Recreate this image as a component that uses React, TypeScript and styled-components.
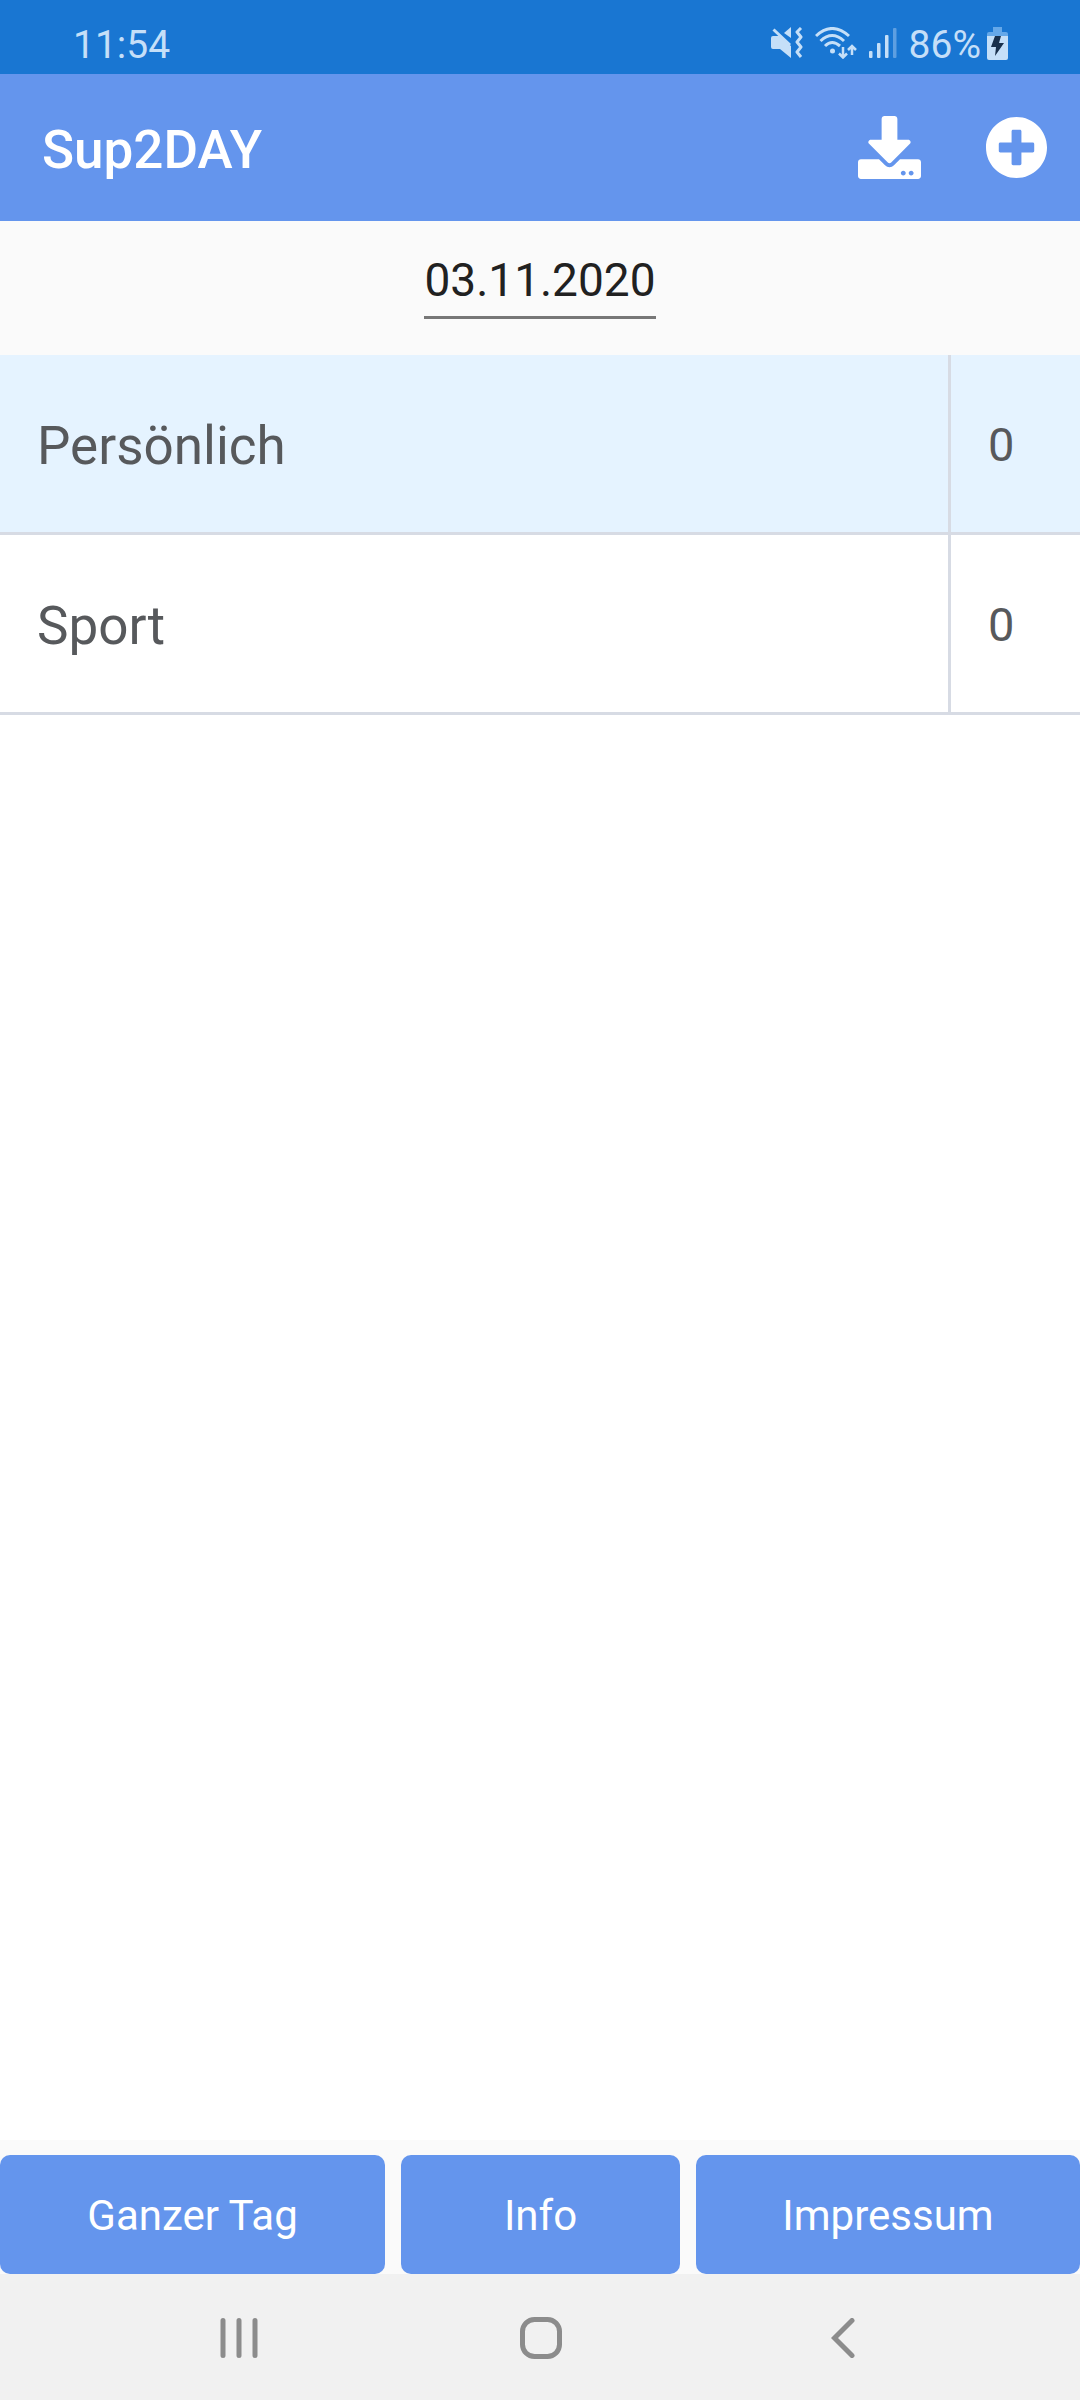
import React, { useState } from "react";
import styled, { createGlobalStyle } from "styled-components";
import { FaDownload, FaPlusCircle } from "react-icons/fa";

const GlobalStyle = createGlobalStyle`
  *, *::before, *::after { box-sizing: border-box; }
  body {
    margin: 0;
    background: #ffffff;
    font-family: Roboto, "Noto Sans", sans-serif;
  }
  button, input { font-family: inherit; }
`;

const Screen = styled.div`
  display: flex;
  flex-direction: column;
  min-height: 100vh;
`;

const StatusBar = styled.div`
  display: flex;
  align-items: center;
  justify-content: space-between;
  height: 74px;
  padding: 12px 72px 0 73px;
  background: #1976d2;
  color: #c5dff8;
`;

const StatusText = styled.span`
  padding-top: 3px;
  font-size: 39px;
  line-height: 48px;
`;

const StatusIcons = styled.div`
  display: flex;
  align-items: center;
  gap: 12px;
`;

const Battery = styled.div`
  display: flex;
  align-items: center;
  gap: 6px;
`;

const AppBar = styled.header`
  display: flex;
  align-items: center;
  justify-content: space-between;
  height: 147px;
  padding: 0 32px 0 42px;
  background: #6495ed;
  color: #ffffff;
`;

const Title = styled.h1`
  margin: 0;
  padding-top: 4px;
  font-size: 53px;
  font-weight: 500;
  line-height: 64px;
`;

const Actions = styled.div`
  display: flex;
  gap: 64px;
`;

const IconButton = styled.button`
  display: flex;
  padding: 0;
  border: 0;
  background: none;
  color: inherit;
  font-size: 63px;
`;

const DateBar = styled.div`
  display: flex;
  justify-content: center;
  height: 134px;
  padding: 24px 0 36px;
  background: #fafafa;
`;

const DateInput = styled.input`
  width: 232px;
  padding: 0 0 2px;
  border: 0;
  border-bottom: 3px solid #777777;
  border-radius: 0;
  outline: 0;
  background: transparent;
  color: #212121;
  font-size: 46px;
  line-height: 56px;
  text-align: center;
`;

const Content = styled.main`
  flex: 1;
  background: #ffffff;
`;

const Table = styled.table`
  width: 100%;
  border-collapse: separate;
  border-spacing: 0;
  color: #57595c;
`;

const Row = styled.tr<{ $selected?: boolean }>`
  height: 180px;
  background: ${(p) => (p.$selected ? "#e5f3ff" : "#ffffff")};
`;

const NameCell = styled.th`
  padding: 4px 37px 0;
  border-bottom: 3px solid #d7dbe4;
  font-size: 53px;
  font-weight: 400;
  line-height: 64px;
  text-align: left;
`;

const CountCell = styled.td`
  width: 132px;
  padding: 3px 37px 0;
  border-bottom: 3px solid #d7dbe4;
  border-left: 3px solid #d7dbe4;
  font-size: 47px;
  line-height: 56px;
`;

const Footer = styled.footer`
  display: grid;
  grid-template-columns: 385fr 279fr 384fr;
  gap: 16px;
  padding-top: 15px;
  background: #fafafa;
`;

const FooterButton = styled.button`
  height: 119px;
  padding: 3px 0 0;
  border: 0;
  border-radius: 10px;
  background: #6495ed;
  color: #ffffff;
  font-size: 42px;
  line-height: 48px;
`;

const NavBar = styled.nav`
  display: flex;
  justify-content: center;
  height: 126px;
  padding: 2px 0 0 2px;
  background: #f1f1f1;
`;

const NavButton = styled.button`
  display: flex;
  align-items: center;
  justify-content: center;
  width: 28%;
  padding: 0;
  border: 0;
  background: none;
  color: #8c8c8c;
`;

const MuteIcon = () => (
  <svg width="32" height="32" viewBox="0 0 32 32" aria-hidden="true">
    <path d="M0 11Q0 9 2 9H8L20 19V31L9 22H2Q0 22 0 20Z" fill="currentColor" />
    <path d="M13 6L20 0V11Z" fill="currentColor" />
    <path d="M2.500 2.500L19 18" stroke="currentColor" strokeWidth="3" />
    <path d="M30 1L26 5L30 10L26 15L30 20L26 25L30 30" fill="none" stroke="currentColor" strokeWidth="3" strokeLinejoin="round" />
  </svg>
);

const WifiIcon = () => (
  <svg width="42" height="32" viewBox="0 0 42 32" fill="none" stroke="currentColor" strokeWidth="3" aria-hidden="true">
    <path d="M1 9Q17 -6 34 9M5.500 14Q17 3 29 14M10 19Q17 12 25 19" />
    <circle cx="17.500" cy="24" r="2.500" fill="currentColor" stroke="none" />
    <path d="M28 20V30M24 26.500L28 30.500L32 26.500M37 28V19M33 23L37 19L41 23" strokeWidth="2.500" />
  </svg>
);

const SignalIcon = () => (
  <svg width="28" height="30" viewBox="0 0 28 30" fill="currentColor" aria-hidden="true">
    <rect x="0" y="23" width="3.500" height="7" rx="1" />
    <rect x="8" y="15" width="3.500" height="15" rx="1" />
    <rect x="16" y="7" width="3.500" height="23" rx="1" />
    <rect x="24" y="0" width="3.500" height="30" rx="1" opacity=".4" />
  </svg>
);

const BatteryIcon = () => (
  <svg width="21" height="33" viewBox="0 0 21 33" aria-hidden="true">
    <path d="M6 0H15V5H19Q21 5 21 7V9H0V7Q0 5 2 5H6Z" fill="#65a8e9" />
    <path d="M0 9H21V31Q21 33 19 33H2Q0 33 0 31Z" fill="#c5dff8" />
    <path d="M8 9H14L12 16H17L8 29L9 20H4Z" fill="#19304c" />
  </svg>
);

const RecentsIcon = () => (
  <svg width="38" height="40" viewBox="0 0 38 40" stroke="currentColor" strokeWidth="5" strokeLinecap="round" aria-hidden="true">
    <path d="M3 2.500V37.500M19 2.500V37.500M35 2.500V37.500" />
  </svg>
);

const HomeIcon = () => (
  <svg width="42" height="42" viewBox="0 0 42 42" fill="none" stroke="currentColor" strokeWidth="5" aria-hidden="true">
    <rect x="2.500" y="2.500" width="37" height="37" rx="12" />
  </svg>
);

const BackIcon = () => (
  <svg width="24" height="40" viewBox="0 0 24 40" fill="none" stroke="currentColor" strokeWidth="5" strokeLinecap="round" aria-hidden="true">
    <path d="M21 2.500L3.500 20L21 37.500" />
  </svg>
);

const categories = [
  { name: "Persönlich", count: 0 },
  { name: "Sport", count: 0 },
];

export default function App() {
  const [date, setDate] = useState("03.11.2020");

  return (
    <Screen>
      <GlobalStyle />
      <StatusBar>
        <StatusText>11:54</StatusText>
        <StatusIcons>
          <MuteIcon />
          <WifiIcon />
          <SignalIcon />
          <Battery>
            <StatusText>86%</StatusText>
            <BatteryIcon />
          </Battery>
        </StatusIcons>
      </StatusBar>
      <AppBar>
        <Title>Sup2DAY</Title>
        <Actions>
          <IconButton type="button" aria-label="Herunterladen">
            <FaDownload />
          </IconButton>
          <IconButton type="button" aria-label="Hinzufügen">
            <FaPlusCircle />
          </IconButton>
        </Actions>
      </AppBar>
      <DateBar>
        <DateInput aria-label="Datum" value={date} onChange={(e) => setDate(e.target.value)} />
      </DateBar>
      <Content>
        <Table>
          <tbody>
            {categories.map((c, i) => (
              <Row key={c.name} $selected={i === 0}>
                <NameCell scope="row">{c.name}</NameCell>
                <CountCell>{c.count}</CountCell>
              </Row>
            ))}
          </tbody>
        </Table>
      </Content>
      <Footer>
        <FooterButton type="button">Ganzer Tag</FooterButton>
        <FooterButton type="button">Info</FooterButton>
        <FooterButton type="button">Impressum</FooterButton>
      </Footer>
      <NavBar>
        <NavButton type="button" aria-label="Letzte Apps">
          <RecentsIcon />
        </NavButton>
        <NavButton type="button" aria-label="Startseite">
          <HomeIcon />
        </NavButton>
        <NavButton type="button" aria-label="Zurück">
          <BackIcon />
        </NavButton>
      </NavBar>
    </Screen>
  );
}
